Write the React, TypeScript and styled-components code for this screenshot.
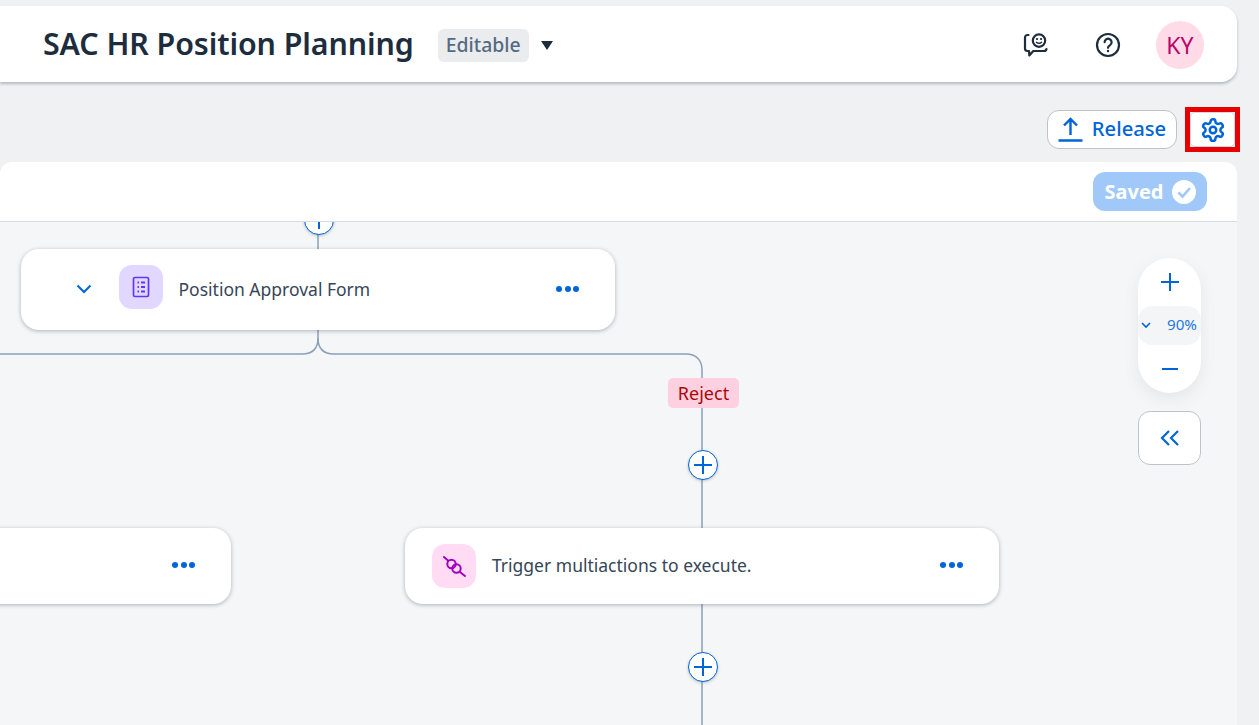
import React from "react";
import styled, { createGlobalStyle } from "styled-components";

const Global = createGlobalStyle`
  html, body { margin: 0; padding: 0; background: #eff1f3; }
  body { font-family: "Noto Sans", "Open Sans", sans-serif; }
`;

const Page = styled.div`
  width: 1259px;
  height: 725px;
  overflow: hidden;
  display: flex;
  flex-direction: column;
  background: #eff1f3;
  padding: 6px 22px 0 0;
  box-sizing: border-box;
`;

const Header = styled.header`
  flex: none;
  height: 76px;
  background: #fff;
  border-radius: 0 16px 16px 0;
  box-shadow: 0 2px 3px rgba(90, 105, 120, 0.4);
  display: flex;
  align-items: center;
  padding: 0 33px 0 43px;
  position: relative;
  z-index: 2;
`;

const Title = styled.h1`
  margin: -2px 0 0;
  font-size: 30.4px;
  font-weight: 600;
  color: #1d2d3e;
  letter-spacing: -0.1px;
`;

const Tag = styled.span`
  margin: 2px 0 0 24px;
  height: 33px;
  box-sizing: border-box;
  padding: 0 8px 2px;
  display: flex;
  align-items: center;
  background: #eaecee;
  border-radius: 6px;
  font-size: 19.4px;
  font-weight: 500;
  color: #556b82;
`;

const Caret = styled.span`
  margin: 3px 0 0 12px;
  width: 0;
  height: 0;
  border-left: 6.5px solid transparent;
  border-right: 6.5px solid transparent;
  border-top: 9px solid #1d2d3e;
`;

const HeaderRight = styled.div`
  margin: 2px 0 0 auto;
  display: flex;
  align-items: center;
`;

const HeaderIcon = styled.span`
  width: 26px;
  height: 26px;
  display: flex;
  margin-right: ${(p: { $gap: number }) => p.$gap}px;
`;

const Avatar = styled.div`
  width: 48px;
  height: 48px;
  border-radius: 50%;
  background: #ffdbe7;
  color: #ba066c;
  font-size: 23px;
  display: flex;
  align-items: center;
  justify-content: center;
`;

const Toolbar = styled.div`
  flex: none;
  height: 80px;
  display: flex;
  align-items: flex-start;
  justify-content: flex-end;
  padding-top: 28px;
  box-sizing: border-box;
`;

const ReleaseButton = styled.button`
  width: 130px;
  height: 39px;
  box-sizing: border-box;
  background: #fff;
  border: 1px solid #bcc3ca;
  border-radius: 12px;
  color: #0064d9;
  font: 500 20.2px "Noto Sans", sans-serif;
  display: flex;
  align-items: center;
  justify-content: center;
  gap: 9px;
  padding: 0;
`;

const ReleaseLabel = styled.span`
  margin-top: -3px;
`;

const GearFrame = styled.div`
  margin: -3px -3px 0 8px;
  width: 55px;
  height: 45px;
  box-sizing: border-box;
  border: 5px solid #e60000;
`;

const GearButton = styled.button`
  width: 100%;
  height: 100%;
  padding: 0;
  box-sizing: border-box;
  background: #fff;
  border: 1px solid #d5d9de;
  border-radius: 5px;
  display: flex;
  align-items: center;
  justify-content: center;
`;

const Panel = styled.section`
  flex: 1;
  min-height: 0;
  display: flex;
  flex-direction: column;
  border-radius: 12px 12px 0 0;
  overflow: hidden;
`;

const PanelHead = styled.div`
  flex: none;
  height: 60px;
  box-sizing: border-box;
  background: #fff;
  border-bottom: 1px solid #d9dde1;
  display: flex;
  align-items: center;
  justify-content: flex-end;
  padding-right: 30px;
`;

const Saved = styled.div`
  width: 114px;
  height: 39px;
  box-sizing: border-box;
  border-radius: 12px;
  background: #a0c9fa;
  color: #fff;
  font-size: 20px;
  font-weight: 700;
  display: flex;
  align-items: center;
  justify-content: center;
  gap: 8px;
`;

const Canvas = styled.div`
  flex: 1;
  position: relative;
  background: #f5f6f8;
  overflow: hidden;
`;

const Wires = styled.svg`
  position: absolute;
  left: 0;
  top: 0;
`;

const Node = styled.div<{ $x: number; $y: number; $w: number; $h: number }>`
  position: absolute;
  left: ${(p) => p.$x}px;
  top: ${(p) => p.$y}px;
  width: ${(p) => p.$w}px;
  height: ${(p) => p.$h}px;
  box-sizing: border-box;
  background: #fff;
  border-radius: 18px;
  box-shadow: 0 1px 4px rgba(80, 95, 110, 0.45);
  display: flex;
  align-items: center;
  padding: 0 36px 2px 27px;
`;

const Chevron = styled.svg`
  margin: 0 26.5px 0 28px;
  flex: none;
`;

const Tile = styled.div<{ $bg: string; $lift?: number }>`
  width: 44px;
  height: 44px;
  flex: none;
  border-radius: 13px;
  background: ${(p) => p.$bg};
  display: flex;
  align-items: center;
  justify-content: center;
  margin-top: ${(p) => -(p.$lift ?? 0)}px;
`;

const NodeLabel = styled.span`
  margin-left: 16px;
  font-size: 17.5px;
  color: #364658;
`;

const Dots = styled.div`
  margin-left: auto;
  display: flex;
  gap: 2.5px;
`;

const Dot = styled.i`
  width: 6px;
  height: 6px;
  border-radius: 50%;
  background: #0064d9;
`;

const Badge = styled.div`
  position: absolute;
  left: 668px;
  top: 156px;
  width: 71px;
  height: 30px;
  border-radius: 5px;
  background: #ffd0e0;
  color: #aa0808;
  font-size: 18px;
  display: flex;
  align-items: center;
  justify-content: center;
`;

const AddCircle = styled.div<{ $x: number; $y: number }>`
  position: absolute;
  left: ${(p) => p.$x}px;
  top: ${(p) => p.$y}px;
  width: 30px;
  height: 30px;
  box-sizing: border-box;
  border-radius: 50%;
  background: #fff;
  border: 1px solid #0064d9;
  box-shadow: 0 1px 3px rgba(80, 95, 110, 0.35);
  display: flex;
  align-items: center;
  justify-content: center;
`;

const ZoomPill = styled.div`
  position: absolute;
  left: 1138px;
  top: 36px;
  width: 63px;
  height: 135px;
  border-radius: 32px;
  background: #fff;
  box-shadow: 0 6px 16px rgba(80, 95, 110, 0.1);
  display: flex;
  flex-direction: column;
  align-items: center;
  justify-content: space-between;
  padding: 15px 0 15px;
  box-sizing: border-box;
`;

const ZoomValue = styled.div`
  width: 63px;
  height: 39px;
  box-sizing: border-box;
  background: #f4f5f7;
  border-radius: 14px;
  color: #1f78e0;
  font-size: 15.2px;
  display: flex;
  align-items: center;
  justify-content: space-between;
  padding: 0 4px 0 3px;
`;

const ZoomText = styled.span`
  margin-top: -3px;
`;

const Collapse = styled.div`
  position: absolute;
  left: 1138px;
  top: 189px;
  width: 63px;
  height: 54px;
  box-sizing: border-box;
  background: #fff;
  border: 1px solid #bcc3ca;
  border-radius: 12px;
  display: flex;
  align-items: center;
  justify-content: center;
`;

const Plus = ({ size = 18 }: { size?: number }) => (
  <svg width={size} height={size} viewBox="0 0 18 18" fill="none" stroke="#0064d9" strokeWidth="2">
    <path d="M9 0v18M0 9h18" />
  </svg>
);

const EditDots = () => (
  <Dots>
    <Dot />
    <Dot />
    <Dot />
  </Dots>
);

export default function App() {
  return (
    <Page>
      <Global />
      <Header>
        <Title>SAC HR Position Planning</Title>
        <Tag>Editable</Tag>
        <Caret />
        <HeaderRight>
          <HeaderIcon $gap={47}>
            <svg width="26" height="26" viewBox="0 0 26 26" fill="none" stroke="#1d2d3e" strokeWidth="2.200" strokeLinecap="round" strokeLinejoin="round">
              <circle cx="17" cy="8.600" r="6.200" />
              <path d="M14.500 10.200c1.400 1.500 3.600 1.500 5 0" strokeWidth="1.500" />
              <path d="M15 7h.1M19 7h.1" />
              <path d="M6.500 3H5.500A2.500 2.500 0 0 0 3 5.500v11A2.500 2.500 0 0 0 5.500 19H7l.3 4.500 4-4.500h10.700a2.500 2.500 0 0 0 2.500-2" />
            </svg>
          </HeaderIcon>
          <HeaderIcon $gap={35}>
            <svg width="26" height="26" viewBox="0 0 26 26" fill="none" stroke="#1d2d3e" strokeWidth="2.200" strokeLinecap="round">
              <circle cx="13" cy="13" r="11" />
              <path d="M9.600 10.200a3.500 3.500 0 1 1 5.400 3c-1.300.8-2 1.400-2 2.600" />
              <path d="M13 19h.02" strokeWidth="2.400" />
            </svg>
          </HeaderIcon>
          <Avatar>KY</Avatar>
        </HeaderRight>
      </Header>
      <Toolbar>
        <ReleaseButton>
          <svg width="25" height="25" viewBox="0 0 25 25" fill="none" stroke="#0064d9" strokeWidth="2.400">
            <path d="M12.500 18V2.500M6 8.500l6.500-6.500 6.500 6.500M.5 23.500h24" />
          </svg>
          <ReleaseLabel>Release</ReleaseLabel>
        </ReleaseButton>
        <GearFrame>
          <GearButton>
            <svg width="26" height="26" viewBox="0 0 24 24" fill="none" stroke="#0064d9" strokeWidth="2.300" strokeLinecap="round" strokeLinejoin="round">
              <path d="M12.220 2h-.44a2 2 0 0 0-2 2v.18a2 2 0 0 1-1 1.730l-.43.250a2 2 0 0 1-2 0l-.15-.08a2 2 0 0 0-2.730.73l-.22.380a2 2 0 0 0 .73 2.730l.15.100a2 2 0 0 1 1 1.720v.510a2 2 0 0 1-1 1.740l-.15.090a2 2 0 0 0-.73 2.730l.22.380a2 2 0 0 0 2.730.73l.15-.08a2 2 0 0 1 2 0l.43.250a2 2 0 0 1 1 1.730V20a2 2 0 0 0 2 2h.44a2 2 0 0 0 2-2v-.18a2 2 0 0 1 1-1.730l.43-.250a2 2 0 0 1 2 0l.15.080a2 2 0 0 0 2.730-.73l.22-.390a2 2 0 0 0-.73-2.730l-.15-.080a2 2 0 0 1-1-1.740v-.500a2 2 0 0 1 1-1.740l.15-.090a2 2 0 0 0 .73-2.730l-.22-.380a2 2 0 0 0-2.730-.73l-.15.080a2 2 0 0 1-2 0l-.43-.250a2 2 0 0 1-1-1.730V4a2 2 0 0 0-2-2z" />
              <circle cx="12" cy="12" r="3" />
            </svg>
          </GearButton>
        </GearFrame>
      </Toolbar>
      <Panel>
        <PanelHead>
          <Saved>
            Saved
            <svg width="24" height="24" viewBox="0 0 24 24">
              <circle cx="12" cy="12" r="12" fill="#fff" />
              <path d="M6.500 12.500l4 4 7.500-8.500" fill="none" stroke="#a0c9fa" strokeWidth="2.600" />
            </svg>
          </Saved>
        </PanelHead>
        <Canvas>
          <Wires width="1237" height="503" fill="none" stroke="#8ba0b6" strokeWidth="1.500">
            <path d="M318 0V116c0 10-5 16-16 16H0" />
            <path d="M318 116c0 10 5 16 16 16H686c10 0 16 6 16 16V503" />
          </Wires>
          <AddCircle $x={304} $y={-17}>
            <Plus />
          </AddCircle>
          <Node $x={21} $y={27} $w={594} $h={81}>
            <Chevron width="16" height="10" viewBox="0 0 16 10" fill="none" stroke="#0064d9" strokeWidth="2">
              <path d="M1.500 1.500L8 8l6.500-6.500" />
            </Chevron>
            <Tile $bg="#e2d8ff" $lift={3}>
              <svg width="18" height="22" viewBox="0 0 18 22" fill="none" stroke="#5d36ff" strokeWidth="1.700">
                <rect x="1.500" y="1.500" width="15" height="19" rx="1.500" />
                <path d="M5.500 6.500h1.500M5.500 11h1.500M5.500 15.500h1.500M9 6.500h4M9 11h4M9 15.500h4" strokeWidth="2" />
              </svg>
            </Tile>
            <NodeLabel>Position Approval Form</NodeLabel>
            <EditDots />
          </Node>
          <Node $x={-363} $y={306} $w={594} $h={76}>
            <EditDots />
          </Node>
          <Node $x={405} $y={306} $w={594} $h={76}>
            <Tile $bg="#ffdcf3" $lift={-2}>
              <svg width="24" height="24" viewBox="0 0 24 24" fill="none" stroke="#a100c2" strokeWidth="2" strokeLinecap="round">
                <path d="M2 3L6 6.500M18 18L23 22" />
                <circle cx="9.500" cy="10" r="4.200" />
                <circle cx="14.500" cy="14.500" r="4.200" />
              </svg>
            </Tile>
            <NodeLabel>Trigger multiactions to execute.</NodeLabel>
            <EditDots />
          </Node>
          <Badge>Reject</Badge>
          <AddCircle $x={688} $y={228}>
            <Plus />
          </AddCircle>
          <AddCircle $x={688} $y={430}>
            <Plus />
          </AddCircle>
          <ZoomPill>
            <Plus />
            <ZoomValue>
              <svg width="10" height="7" viewBox="0 0 10 7" fill="none" stroke="#0064d9" strokeWidth="1.600">
                <path d="M1 1l4 4 4-4" />
              </svg>
              <ZoomText>90%</ZoomText>
            </ZoomValue>
            <svg width="16" height="18" viewBox="0 0 16 18" fill="none" stroke="#0064d9" strokeWidth="2">
              <path d="M0 9h16" />
            </svg>
          </ZoomPill>
          <Collapse>
            <svg width="20" height="16" viewBox="0 0 20 16" fill="none" stroke="#0064d9" strokeWidth="2.200">
              <path d="M9 1L2 8l7 7M18 1l-7 7 7 7" />
            </svg>
          </Collapse>
        </Canvas>
      </Panel>
    </Page>
  );
}
